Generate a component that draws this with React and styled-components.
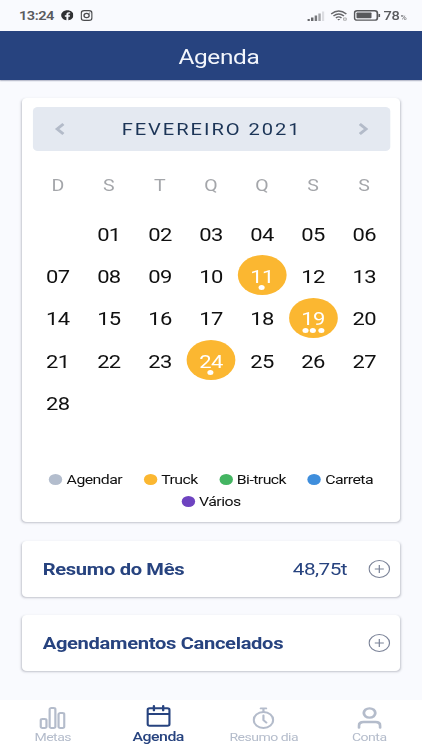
import React from "react";
import styled, { createGlobalStyle } from "styled-components";
import { FaFacebook } from "react-icons/fa";

const NAVY = "#27437f";
const MUTED = "#b4bccb";
const YELLOW = "#fbb731";

const GlobalStyle = createGlobalStyle`
  * {
    box-sizing: border-box;
  }
  body {
    margin: 0;
    overflow: hidden;
    background-color: #f9fafe;
    font-family: Roboto, "Liberation Sans", sans-serif;
  }
  svg {
    display: block;
  }
`;

const Screen = styled.div`
  width: 346px;
  height: 750px;
  display: flex;
  flex-direction: column;
  background-color: #f9fafe;
  transform: scaleX(1.21965);
  transform-origin: 0 0;
`;

const StatusBar = styled.div`
  height: 31px;
  padding: 0 12.5px 0 15.5px;
  display: flex;
  justify-content: space-between;
  align-items: center;
  color: #5a5b5e;
`;

const StatusGroup = styled.div`
  display: flex;
  align-items: center;
  gap: ${props => props.$gap}px;
`;

const Clock = styled.span`
  font-size: 12px;
  font-weight: 600;
  line-height: 14px;
  letter-spacing: -0.4px;
`;

const Percent = styled.span`
  font-size: 12px;
  font-weight: 500;
  line-height: 14px;
  letter-spacing: -0.4px;
  margin-left: -2px;
`;

const PercentSign = styled.span`
  font-size: 7px;
  line-height: 8px;
  margin: 4px 0 0 -4px;
  color: #66676b;
`;

const Header = styled.header`
  height: 49px;
  display: flex;
  justify-content: center;
  align-items: center;
  background-color: ${NAVY};
  box-shadow: 0 1px 1px rgba(40, 50, 90, 0.35);
`;

const Title = styled.h1`
  margin: 2px 0 0 13px;
  font-size: 20px;
  font-weight: 400;
  line-height: 24px;
  letter-spacing: -0.3px;
  color: #f3f6fc;
`;

const Main = styled.main`
  flex: 1;
  padding: 18px 18px 0;
`;

const Card = styled.section`
  background-color: white;
  border-radius: 4px;
  box-shadow: 0 1px 2px rgba(50, 55, 75, 0.28);
`;

const Calendar = styled(Card)`
  height: 424px;
  padding: 9px 8.5px 0;
`;

const MonthBar = styled.div`
  height: 44px;
  padding: 0 18px;
  display: flex;
  justify-content: space-between;
  align-items: center;
  background-color: #e4e9f1;
  border-radius: 4px;
`;

const Month = styled.span`
  margin: 1px 0 0 1px;
  font-size: 16.5px;
  line-height: 20px;
  letter-spacing: 1.6px;
  color: #1c3557;
`;

const Week = styled.div`
  display: grid;
  grid-template-columns: repeat(7, 1fr);
  justify-items: center;
  align-items: center;
  height: 42.3px;
`;

const WeekHeader = styled(Week)`
  height: 40px;
  margin: 14px 0 7px;
`;

const WeekDay = styled.span`
  font-size: 16px;
  color: #a4a6aa;
`;

const Day = styled.div`
  width: 40px;
  height: 40px;
  padding-top: 3px;
  display: flex;
  justify-content: center;
  align-items: center;
  position: relative;
  border-radius: 50%;
  font-size: 18px;
  line-height: 22px;
  letter-spacing: -0.5px;
  color: ${props => (props.$marked ? "white" : "#101010")};
  background-color: ${props => (props.$marked ? YELLOW : "transparent")};
`;

const Marks = styled.div`
  position: absolute;
  bottom: 5px;
  left: 0;
  width: 100%;
  display: flex;
  justify-content: center;
  gap: 1.5px;
`;

const Mark = styled.span`
  width: 5px;
  height: 5px;
  border-radius: 50%;
  background-color: white;
`;

const Legend = styled.div`
  margin-top: 45px;
  display: flex;
  flex-wrap: wrap;
  justify-content: center;
  column-gap: 17.5px;
`;

const LegendItem = styled.div`
  height: 22px;
  display: flex;
  align-items: center;
  gap: 3.5px;
  font-size: 13px;
  letter-spacing: -0.45px;
  color: #101010;
`;

const Dot = styled.span`
  width: 11px;
  height: 11px;
  border-radius: 50%;
  background-color: ${props => props.$color};
`;

const Summary = styled(Card)`
  height: 56px;
  margin-top: 18px;
  padding: 0 8.5px 0 17px;
  display: flex;
  align-items: center;
  color: ${NAVY};

  &:nth-child(2) {
    margin-top: 19px;
  }
`;

const SummaryTitle = styled.h2`
  flex: 1;
  margin: 1px 0 0;
  font-size: 16.5px;
  font-weight: 700;
  letter-spacing: -0.26px;
`;

const Amount = styled.span`
  margin-right: 17px;
  font-size: 17px;
  letter-spacing: -0.45px;
`;

const TabBar = styled.nav`
  height: 50px;
  display: grid;
  grid-template-columns: repeat(4, 1fr);
  background-color: white;
`;

const Tab = styled.div`
  display: flex;
  flex-direction: column;
  align-items: center;
  padding-top: ${props => (props.$active ? 5 : 7)}px;
  color: ${props => (props.$active ? NAVY : MUTED)};
`;

const TabLabel = styled.span`
  font-size: ${props => (props.$active ? 13 : 11.5)}px;
  font-weight: ${props => (props.$active ? 500 : 400)};
  line-height: 14px;
  letter-spacing: -0.42px;
  margin-top: ${props => (props.$active ? 3 : 1)}px;
`;

const InstagramIcon = () => (
  <svg width="10" height="11" viewBox="0 0 10 11" fill="none" stroke="#4a4b4e" strokeWidth="1.1">
    <rect x="0.6" y="0.6" width="8.8" height="9.8" rx="2.5" />
    <circle cx="5" cy="5.5" r="2.1" />
    <circle cx="7.5" cy="2.9" r="0.5" fill="#4a4b4e" stroke="none" />
  </svg>
);

const SignalIcon = () => (
  <svg width="14" height="10" viewBox="0 0 14 10">
    <path d="M0 8h2v2H0zM3 6.5h2V10H3z" fill="#66676b" />
    <path d="M6 4.5h2V10H6z" fill="#77787c" />
    <path d="M9 2.5h2V10H9z" fill="#a5a6aa" />
    <path d="M12 0.5h2V10h-2z" fill="#dcdde2" />
  </svg>
);

const WifiIcon = () => (
  <svg width="14" height="11" viewBox="0 0 14 11" fill="none" stroke="#66676b">
    <path d="M0.5 4Q6.7-2 13 4M2.4 6Q6.7 2 11 6M4.4 8Q6.7 5.6 9 8" strokeWidth="1.2" />
    <path d="M5.5 9l1.2 1.5L8 9z" fill="#66676b" stroke="none" />
    <path d="M10.7 8h2.2v2.2h-2.2z" strokeWidth="0.7" stroke="#999" />
  </svg>
);

const BatteryIcon = () => (
  <svg width="22" height="11" viewBox="0 0 22 11">
    <rect x="0.6" y="0.7" width="18.8" height="9.4" rx="2.2" fill="none" stroke="#58595c" strokeWidth="1.4" />
    <rect x="2.3" y="2.6" width="12.3" height="5.6" rx="0.6" fill="#58595c" />
    <path d="M20.3 4h1.4v3h-1.4z" fill="#58595c" />
  </svg>
);

const Chevron = ({ next }) => (
  <svg width="8" height="12" viewBox="0 0 8 12" fill="none" stroke="#b3bbc9" strokeWidth="2.5">
    <path d={next ? "M1 1l5.2 5L1 11" : "M7 1L1.8 6 7 11"} />
  </svg>
);

const PlusIcon = () => (
  <svg width="18" height="18" viewBox="0 0 18 18" fill="none" stroke="#7b8398">
    <circle cx="9" cy="9" r="8.4" />
    <path d="M5.3 9h7.4M9 5v8" />
  </svg>
);

const GoalsIcon = () => (
  <svg width="22" height="22" viewBox="0 0 22 22" fill="none" stroke="currentColor" strokeWidth="1.8">
    <rect x="1.4" y="12" width="4.7" height="9" rx="1.5" />
    <rect x="8.7" y="1" width="4.7" height="20" rx="1.5" />
    <rect x="16" y="6" width="4.7" height="15" rx="1.5" />
  </svg>
);

const CalendarIcon = () => (
  <svg width="20" height="22" viewBox="0 0 20 22" fill="none" stroke="currentColor" strokeWidth="1.9" strokeLinecap="round">
    <rect x="1" y="3.2" width="18" height="17.6" rx="1.8" />
    <path d="M1.5 9h17M6.2 1v4.4M13.8 1v4.4" />
  </svg>
);

const TimerIcon = () => (
  <svg width="18" height="22" viewBox="0 0 18 22" fill="none" stroke="currentColor" strokeWidth="1.8" strokeLinecap="round" strokeLinejoin="round">
    <circle cx="9" cy="13" r="8" />
    <path d="M6.8 1.4h4.4M9 1.4V5M9 8.5v4.7l2.4 2.4" />
  </svg>
);

const AccountIcon = () => (
  <svg width="20" height="22" viewBox="0 0 20 22" fill="none" stroke="currentColor" strokeWidth="2.3" strokeLinecap="round">
    <circle cx="10" cy="6" r="4.7" />
    <path d="M1.3 20.7v-1.8q0-3.9 3.8-3.9h9.8q3.8 0 3.8 3.9v1.8" />
  </svg>
);

const weekDays = ["D", "S", "T", "Q", "Q", "S", "S"];

const weeks = [
  ["", "01", "02", "03", "04", "05", "06"],
  ["07", "08", "09", "10", "11", "12", "13"],
  ["14", "15", "16", "17", "18", "19", "20"],
  ["21", "22", "23", "24", "25", "26", "27"],
  ["28", "", "", "", "", "", ""]
];

const schedules = { 11: 1, 19: 3, 24: 1 };

const legend = [
  { label: "Agendar", color: "#b3bdcd" },
  { label: "Truck", color: YELLOW },
  { label: "Bi-truck", color: "#44b562" },
  { label: "Carreta", color: "#3f8edc" },
  { label: "Vários", color: "#6e43c0" }
];

const tabs = [
  { label: "Metas", Icon: GoalsIcon },
  { label: "Agenda", Icon: CalendarIcon, active: true },
  { label: "Resumo dia", Icon: TimerIcon },
  { label: "Conta", Icon: AccountIcon }
];

const App = () => (
  <>
    <GlobalStyle />
    <Screen>
      <StatusBar>
        <StatusGroup $gap={5.5}>
          <Clock>13:24</Clock>
          <FaFacebook size={10.5} color="#303134" />
          <InstagramIcon />
        </StatusGroup>
        <StatusGroup $gap={5}>
          <SignalIcon />
          <WifiIcon />
          <BatteryIcon />
          <Percent>78</Percent>
          <PercentSign>%</PercentSign>
        </StatusGroup>
      </StatusBar>
      <Header>
        <Title>Agenda</Title>
      </Header>
      <Main>
        <Calendar>
          <MonthBar>
            <Chevron />
            <Month>FEVEREIRO 2021</Month>
            <Chevron next />
          </MonthBar>
          <WeekHeader>
            {weekDays.map((day, idx) => (
              <WeekDay key={idx}>{day}</WeekDay>
            ))}
          </WeekHeader>
          {weeks.map((week, row) => (
            <Week key={row}>
              {week.map((day, idx) => (
                <Day key={idx} $marked={Boolean(schedules[day])}>
                  {day}
                  {schedules[day] && (
                    <Marks>
                      {Array.from({ length: schedules[day] }, (_, i) => (
                        <Mark key={i} />
                      ))}
                    </Marks>
                  )}
                </Day>
              ))}
            </Week>
          ))}
          <Legend>
            {legend.map(({ label, color }) => (
              <LegendItem key={label}>
                <Dot $color={color} />
                {label}
              </LegendItem>
            ))}
          </Legend>
        </Calendar>
        <Summary>
          <SummaryTitle>Resumo do Mês</SummaryTitle>
          <Amount>48,75t</Amount>
          <PlusIcon />
        </Summary>
        <Summary>
          <SummaryTitle>Agendamentos Cancelados</SummaryTitle>
          <PlusIcon />
        </Summary>
      </Main>
      <TabBar>
        {tabs.map(({ label, Icon, active }) => (
          <Tab key={label} $active={active}>
            <Icon />
            <TabLabel $active={active}>{label}</TabLabel>
          </Tab>
        ))}
      </TabBar>
    </Screen>
  </>
);

export default App;
